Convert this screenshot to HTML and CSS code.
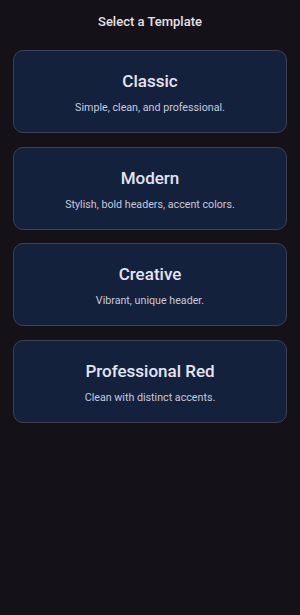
FILE: index.html
```html
<!DOCTYPE html>
<html lang="en">
<head>
    <meta charset="UTF-8" />
    <meta name="viewport" content="width=device-width, initial-scale=1.0" />
    <title>Select a Template</title>
    <link rel="stylesheet" href="styles.css">
</head>
<body>
    <div class="page">
        <div class="page-title">Select a Template</div>
        <div class="template-list">
            <div class="template-card">
                <div class="template-name">Classic</div>
                <div class="template-desc">Simple, clean, and professional.</div>
            </div>
            <div class="template-card">
                <div class="template-name">Modern</div>
                <div class="template-desc">Stylish, bold headers, accent colors.</div>
            </div>
            <div class="template-card">
                <div class="template-name">Creative</div>
                <div class="template-desc">Vibrant, unique header.</div>
            </div>
            <div class="template-card">
                <div class="template-name">Professional Red</div>
                <div class="template-desc">Clean with distinct accents.</div>
            </div>
        </div>
    </div>
</body>
</html>
```

FILE: styles.css
```css
body,
html {
    height: 100%;
    margin: 0;
    padding: 0;
    background-color: #141218;
    font-family: Roboto, "Noto Sans", sans-serif;
}

.page {
    padding: 13px 13px;
}

.page-title {
    color: #e6e1e5;
    font-size: 13px;
    font-weight: 500;
    text-align: center;
    line-height: 18px;
    margin-bottom: 19px;
}

.template-list {
    display: flex;
    flex-direction: column;
    gap: 13.5px;
}

.template-card {
    background-color: #14213d;
    border: 1px solid #3b4054;
    border-radius: 10px;
    padding: 19px 12px 17px;
    text-align: center;
    cursor: pointer;
}

.template-name {
    color: #e3e5f2;
    font-size: 17px;
    font-weight: 500;
    line-height: 22px;
    margin-bottom: 9px;
}

.template-desc {
    color: #c8c9da;
    font-size: 10.7px;
    line-height: 14px;
}
```
